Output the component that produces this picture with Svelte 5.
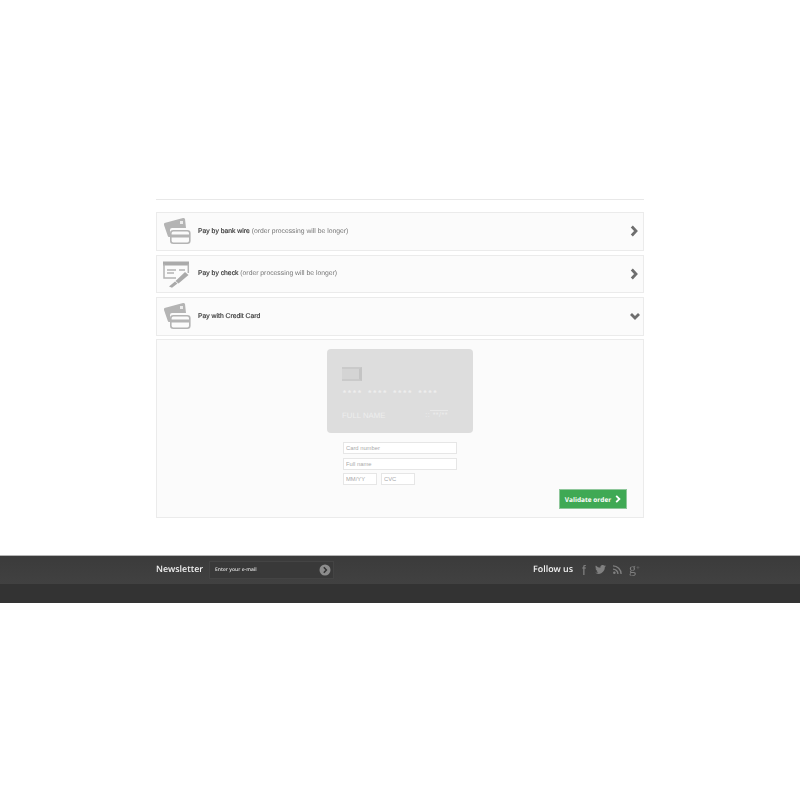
<script>
	const methods = [
		{ icon: 'card', name: 'Pay by bank wire', note: '(order processing will be longer)', open: false },
		{ icon: 'check', name: 'Pay by check', note: '(order processing will be longer)', open: false },
		{ icon: 'card', name: 'Pay with Credit Card', note: '', open: true }
	];
</script>

<main class="page">
	<section class="wrap">
		{#each methods as m}
			<div class="method">
				<svg class="m-icon" width="28" height="28" viewBox="0 0 28 28">
					{#if m.icon === 'card'}
						<path fill="#b4b4b4" d="M1.500 6 L20 1 Q21.500 .8 22 2 L23 11 H9 Q7 11 7 13 V20 H6 Q5 20 4.800 19 L1 8 Q.8 6.500 1.500 6 Z" />
						<rect fill="#ececec" x="17" y="4" width="3" height="3" />
						<rect x="7.800" y="13.800" width="19" height="12.500" rx="2.500" fill="none" stroke="#b4b4b4" stroke-width="1.600" />
						<rect x="7" y="17.500" width="20" height="3" fill="#b4b4b4" />
					{:else}
						<rect x="0" y="1.500" width="26" height="4" fill="#aaa" />
						<path fill="none" stroke="#b4b4b4" stroke-width="1.500" d="M1 4 V18 H13 M25.300 4 V13" />
						<path stroke="#b4b4b4" stroke-width="1.500" d="M4 10 H13 M4 13 H11 M16 10 H22" />
						<path fill="#aaa" d="M22 12 L25.500 15 L15.500 23.500 L12.500 21 Z M12 21.500 L14.500 23.500 L9 27.800 L6 26.500 Z" />
					{/if}
				</svg>
				<p class="m-label"><strong>{m.name}</strong> {m.note}</p>
				<svg class="m-arrow" width="10" height="12" viewBox="0 0 10 12">
					<path fill="none" stroke="#6e6e6e" stroke-width="2.800" d={m.open ? 'M1 4 L5 8 L9 4' : 'M1.800 1.500 L6 6 L1.800 10.500'} />
				</svg>
			</div>
		{/each}

		<div class="panel">
			<div class="card">
				<div class="chip"></div>
				<div class="card-num">**** **** **** ****</div>
				<div class="card-bottom">
					<span class="card-name">FULL NAME</span>
					<span class="card-exp"><i></i>:: **/**</span>
				</div>
			</div>
			<form class="fields">
				<input placeholder="Card number" />
				<input placeholder="Full name" />
				<div class="small">
					<input placeholder="MM/YY" />
					<input placeholder="CVC" />
				</div>
			</form>
			<div class="actions">
				<button type="button" class="validate">
					Validate order
					<svg width="6" height="8" viewBox="0 0 6 8"><path fill="none" stroke="#fff" stroke-width="1.800" d="M1.200 .8 L4.400 4 L1.200 7.200" /></svg>
				</button>
			</div>
		</div>
	</section>

	<footer class="footer">
		<div class="foot-top">
			<div class="foot-inner">
				<span class="foot-title">Newsletter</span>
				<div class="news">
					<span>Enter your e-mail</span>
					<svg width="12" height="12" viewBox="0 0 12 12">
						<circle cx="6" cy="6" r="5.500" fill="#8c8c8c" />
						<path fill="none" stroke="#333" stroke-width="1.500" d="M4.800 3.200 L7.400 6 L4.800 8.800" />
					</svg>
				</div>
				<span class="foot-title follow">Follow us</span>
				<div class="social">
					<span class="fb">f</span>
					<svg width="11" height="9" viewBox="0 0 24 20"><path fill="#808080" d="M24 2.400a9.800 9.800 0 0 1-2.800.8 4.900 4.900 0 0 0 2.200-2.700 9.800 9.800 0 0 1-3.100 1.200 4.900 4.900 0 0 0-8.400 4.500A14 14 0 0 1 1.700 1a4.900 4.900 0 0 0 1.500 6.600 4.900 4.900 0 0 1-2.200-.6 4.900 4.900 0 0 0 3.900 4.900 4.900 4.900 0 0 1-2.200.1 4.900 4.900 0 0 0 4.600 3.400A9.900 9.900 0 0 1 0 17.400 14 14 0 0 0 21.500 5a10 10 0 0 0 2.500-2.600z" /></svg>
					<svg width="9" height="9" viewBox="0 0 10 10"><circle cx="1.500" cy="8.500" r="1.400" fill="#808080" /><path fill="none" stroke="#808080" stroke-width="1.500" d="M0 4.500 A5.500 5.500 0 0 1 5.500 10 M0 1 A9 9 0 0 1 9 10" /></svg>
					<span class="gplus">g<small>+</small></span>
				</div>
			</div>
		</div>
		<div class="foot-bottom"></div>
	</footer>
</main>

<style>
	:global(body) {
		background: #fff;
		text-rendering: geometricPrecision;
	}

	.page {
		padding-top: 199px;
		font-family: "Liberation Sans", Arial, sans-serif;
		opacity: 0.999;
	}

	.wrap {
		width: 488px;
		margin: 0 auto 37.500px;
		padding-top: 12px;
		border-top: 1px solid #e8e8e8;
		display: flex;
		flex-direction: column;
		gap: 4px;
	}

	.method {
		height: 38.500px;
		box-sizing: border-box;
		border: 1px solid #ebebeb;
		background: #fbfbfb;
		display: flex;
		align-items: center;
		padding: 0 3px 0 6px;
	}

	.m-icon {
		margin-right: 7px;
		flex: none;
	}

	.m-label {
		flex: 1;
		margin: 0;
		font-size: 6.800px;
		color: #777;
	}

	.m-label strong {
		font-weight: normal;
		color: #333;
		-webkit-text-stroke: 0.15px #333;
	}

	.panel {
		box-sizing: border-box;
		height: 178.500px;
		margin-top: -0.500px;
		border: 1px solid #ebebeb;
		background: #fbfbfb;
		display: flex;
		flex-direction: column;
		align-items: center;
		padding-top: 9px;
	}

	.card {
		box-sizing: border-box;
		width: 146px;
		height: 84px;
		background: #dddddd;
		border-radius: 4px;
		padding: 18px 15px 0;
		color: #eeeeee;
		font-family: "Liberation Mono", monospace;
	}

	.chip {
		width: 20px;
		height: 14px;
		box-sizing: border-box;
		background: #d4d4d4;
		border-right: 3px solid #c4c4c4;
		border-top: 2px solid #cacaca;
		border-bottom: 2px solid #cacaca;
	}

	.card-num {
		font-size: 8.400px;
		font-weight: 700;
		line-height: 10px;
		margin-top: 8px;
		white-space: nowrap;
	}

	.card-bottom {
		display: flex;
		justify-content: space-between;
		margin-top: 12px;
		font-family: "Liberation Sans", sans-serif;
		font-size: 7.800px;
		align-items: flex-end;
		line-height: 10px;
	}

	.card-exp {
		font-size: 7px;
		position: relative;
		margin-right: 10px;
		letter-spacing: 0.5px;
		white-space: nowrap;
	}

	.card-exp i {
		position: absolute;
		right: 0;
		top: -1px;
		width: 18px;
		height: 1px;
		background: #e8e8e8;
	}

	.fields {
		margin-top: 9px;
		width: 114px;
		display: flex;
		flex-direction: column;
		gap: 3.500px;
	}

	.fields input {
		box-sizing: border-box;
		width: 100%;
		height: 12px;
		padding: 0 2px;
		border: 1px solid #e6e6e6;
		border-radius: 0;
		background: #fff;
		font-family: "Liberation Sans", Arial, sans-serif;
		font-size: 5.800px;
		outline: none;
	}

	.fields input::placeholder {
		color: #aaa;
		opacity: 1;
	}

	.small {
		display: flex;
		gap: 4px;
	}

	.small input {
		width: 34px;
	}

	.actions {
		align-self: flex-end;
		margin: 4px 16px 0 0;
	}

	.validate {
		width: 68px;
		height: 20px;
		padding: 0;
		border: 1px solid #8fc79b;
		background: #3fa954;
		color: #fff;
		font-family: "Open Sans", sans-serif;
		font-weight: 700;
		font-size: 6.500px;
		text-rendering: geometricPrecision;
		display: flex;
		align-items: center;
		justify-content: center;
		gap: 4px;
	}

	.footer {
		color: #fff;
		font-family: "Open Sans", sans-serif;
	}

	.foot-top {
		height: 29px;
		background: linear-gradient(#3b3b3b, #414141);
		border-top: 1px solid #b5b5b5;
		box-sizing: border-box;
	}

	.foot-inner {
		width: 488px;
		height: 100%;
		margin: 0 auto;
		display: flex;
		align-items: center;
	}

	.foot-title {
		font-size: 8.900px;
		font-weight: 600;
		color: #f2f2f2;
		width: 46px;
		padding-bottom: 3px;
		white-space: nowrap;
	}

	.news {
		box-sizing: border-box;
		width: 125px;
		height: 18px;
		margin-left: 7px;
		padding: 0 2px 0 5px;
		background: #393939;
		border: 1px solid #444;
		display: flex;
		align-items: center;
		justify-content: space-between;
		font-size: 5px;
		font-weight: 600;
		color: #ddd;
	}

	.follow {
		width: 40px;
		margin-left: auto;
		margin-right: 9px;
	}

	.social {
		display: flex;
		align-items: center;
		gap: 7px;
		margin-right: 4px;
		padding-bottom: 1px;
		color: #808080;
		font-family: "Liberation Serif", serif;
	}

	.fb {
		font-family: "Liberation Sans", sans-serif;
		font-size: 14px;
		line-height: 14px;
		width: 6px;
	}

	.gplus {
		font-size: 14px;
		line-height: 14px;
		padding-bottom: 2px;
	}

	.gplus small {
		font-size: 7px;
		vertical-align: 3px;
	}

	.foot-bottom {
		height: 19px;
		background: #333;
	}
</style>
